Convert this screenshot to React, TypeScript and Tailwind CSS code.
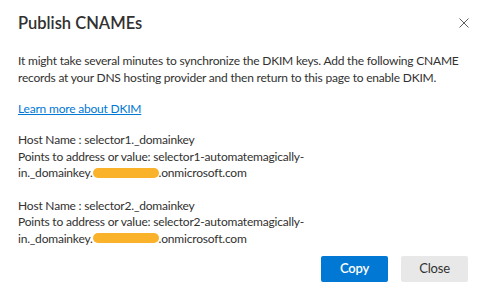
import React from "react"

const Redacted: React.FC = () => (
  <span className="inline-block align-middle w-[66px] h-[10px] rounded-full bg-[#f9b22a] -mt-[2px]" />
)

const Record: React.FC<{n: number}> = ({n}) => (
  <div className="leading-[16.5px] whitespace-nowrap">
    <div>Host Name : selector{n}._domainkey</div>
    <div>Points to address or value: selector{n}-automatemagically-</div>
    <div>
      in._domainkey.
      <Redacted />
      .onmicrosoft.com
    </div>
  </div>
)

const App: React.FC = () => {
  return (
    <main className="w-[497px] h-[296px] bg-white text-[#323130] font-['Lato',sans-serif] text-[12px] tracking-[-0.2px] relative">
      <section className="flex flex-col pl-[18px] pr-[22px] pt-[10px]">
        <header className="flex items-start justify-between">
          <h1 className="text-[16.5px] font-semibold leading-[26px] tracking-normal">Publish CNAMEs</h1>
          <button className="mt-[8px] mr-[6px] text-[#605e5c]">
            <svg width="10" height="10" viewBox="0 0 10 10" fill="none" stroke="currentColor" strokeWidth="1">
              <path d="M0.5 0.5L9.5 9.5M9.5 0.5L0.5 9.5" />
            </svg>
          </button>
        </header>
        <p className="mt-[16px] leading-[17px] whitespace-nowrap">
          It might take several minutes to synchronize the DKIM keys. Add the following CNAME
          <br />
          records at your DNS hosting provider and then return to this page to enable DKIM.
        </p>
        <a className="mt-[14px] text-[#0078d4] underline leading-[17px] self-start" href="#">
          Learn more about DKIM
        </a>
        <div className="mt-[15px] flex flex-col gap-[16px]">
          <Record n={1} />
          <Record n={2} />
        </div>
        <div className="mt-[9px] flex justify-end gap-[13px] pr-[7px]">
          <button className="w-[67px] h-[26px] rounded-[2px] bg-[#0078d4] text-white font-semibold text-[13px]">Copy</button>
          <button className="w-[67px] h-[26px] rounded-[2px] bg-[#e8e8e8] text-[#323130] text-[13px]">Close</button>
        </div>
      </section>
    </main>
  )
}

export default App
